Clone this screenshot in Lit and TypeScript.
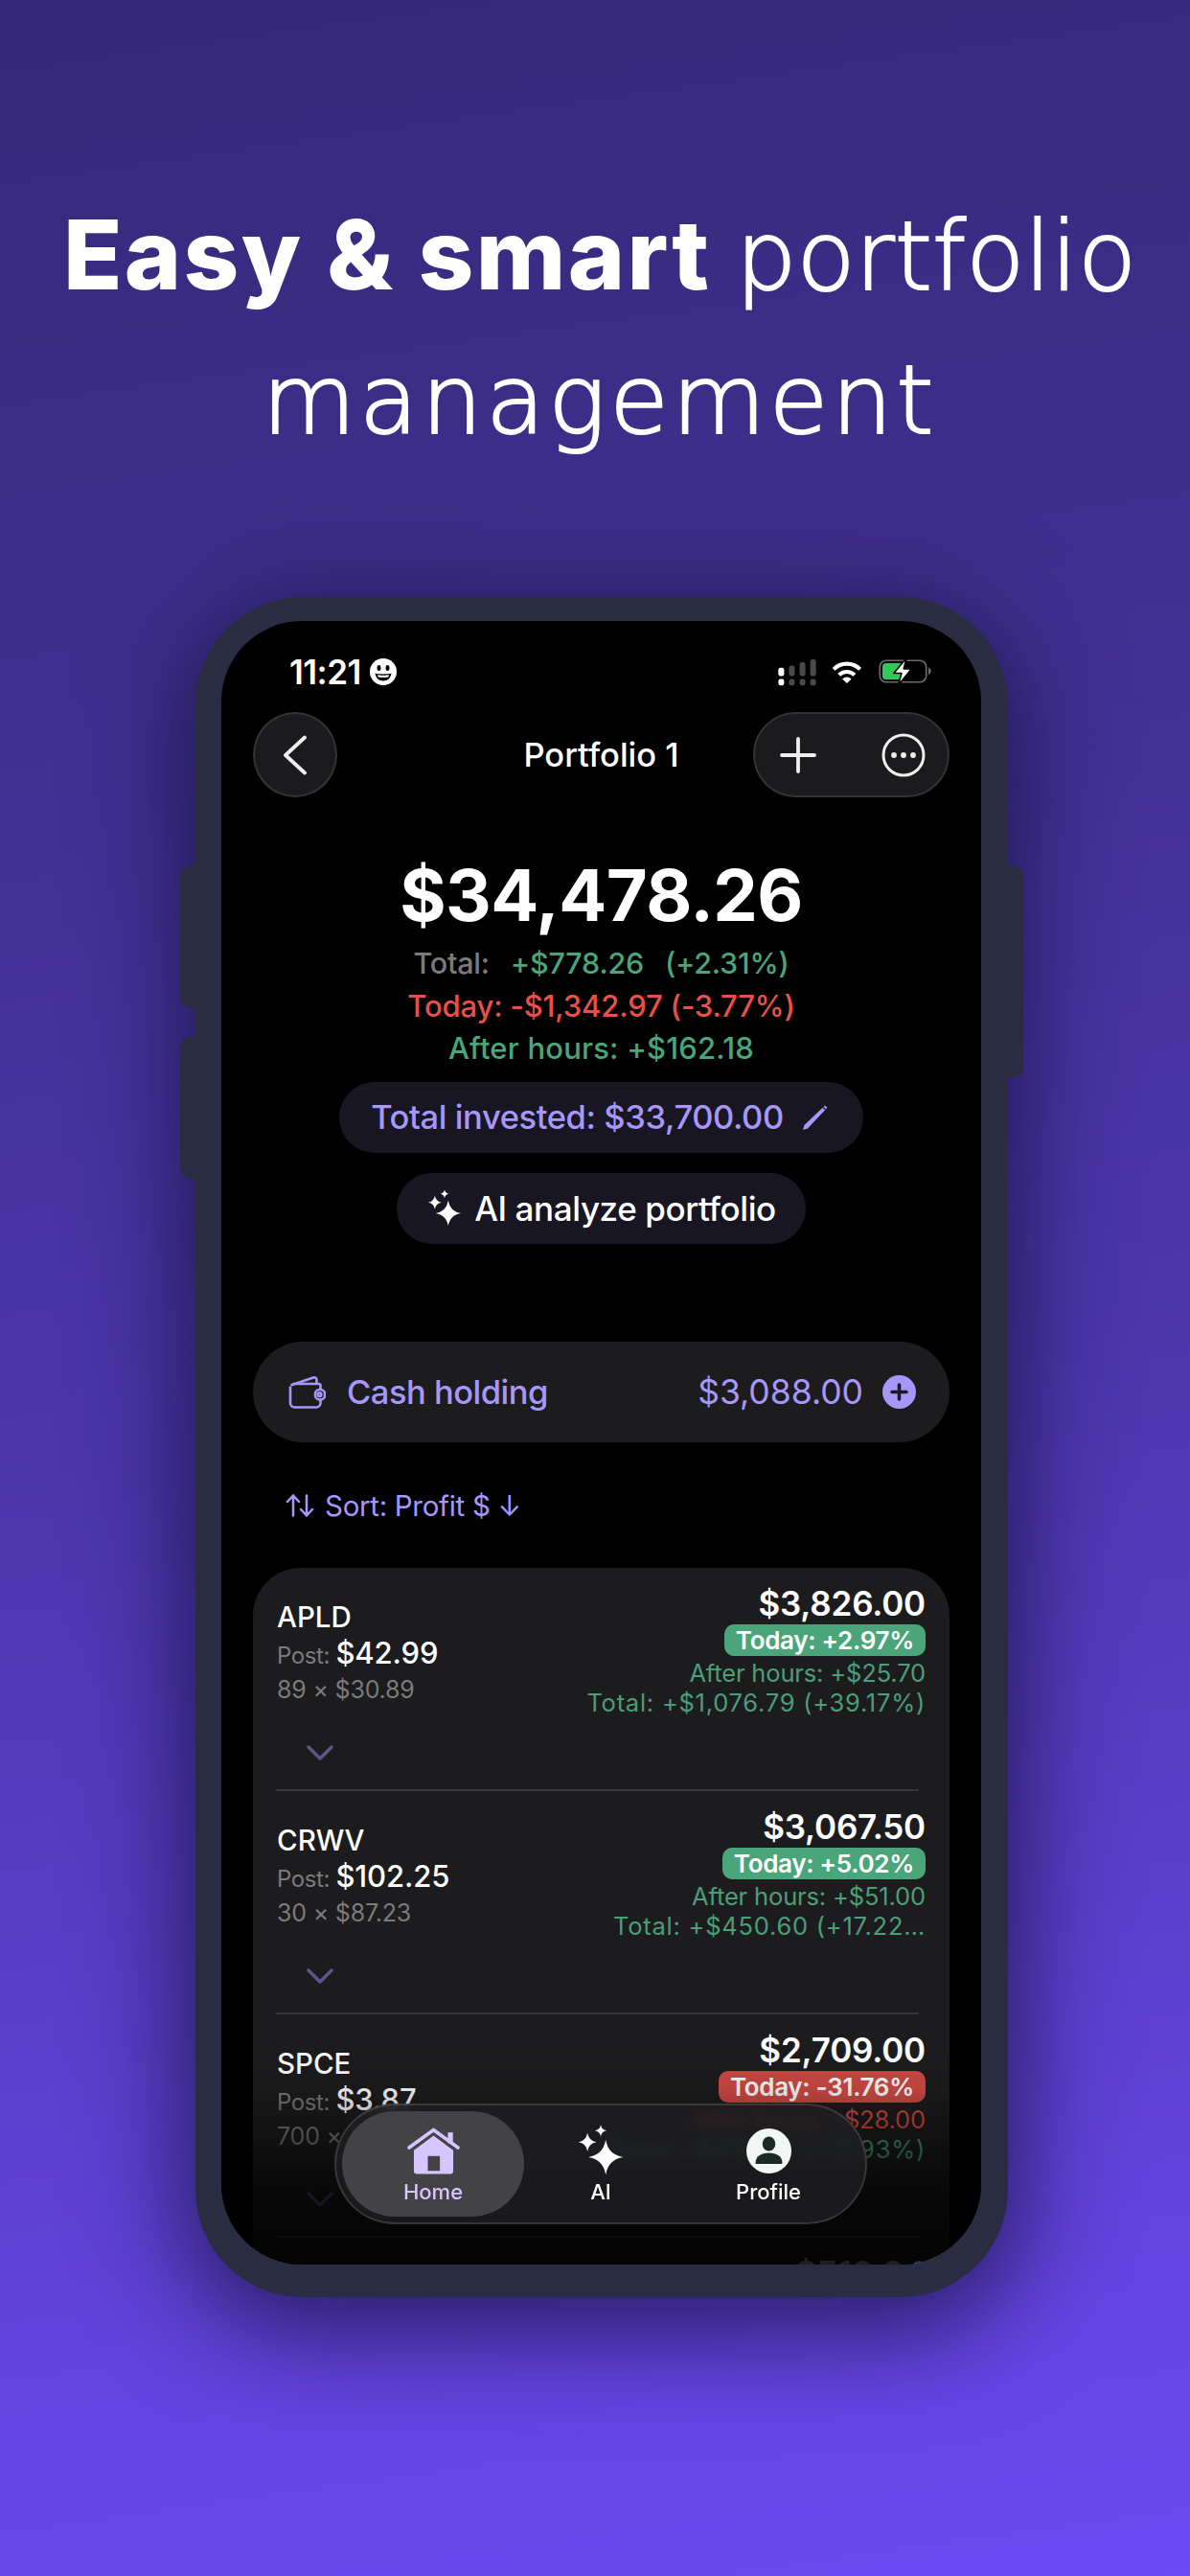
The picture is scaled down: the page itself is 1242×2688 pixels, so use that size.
import { LitElement, html, css } from "lit";
import { customElement } from "lit/decorators.js";

type Row = { sym: string; post: string; shares: string; value: string; today: string; up: boolean; after: string; total: string };

const ROWS: Row[] = [
  { sym: "APLD", post: "$42.99", shares: "89 × $30.89", value: "$3,826.00", today: "Today: +2.97%", up: true, after: "After hours: +$25.70", total: "Total: +$1,076.79 (+39.17%)" },
  { sym: "CRWV", post: "$102.25", shares: "30 × $87.23", value: "$3,067.50", today: "Today: +5.02%", up: true, after: "After hours: +$51.00", total: "Total: +$450.60 (+17.22…" },
  { sym: "SPCE", post: "$3.87", shares: "700 × $3.28", value: "$2,709.00", today: "Today: -31.76%", up: false, after: "After hours: -$28.00", total: "Total: +$412.00 (+17.93%)" },
];

const star = (cx: number, cy: number, r: number) => {
  const k = r * 0.14;
  return `M${cx} ${cy - r}Q${cx + k} ${cy - k} ${cx + r} ${cy}Q${cx + k} ${cy + k} ${cx} ${cy + r}Q${cx - k} ${cy + k} ${cx - r} ${cy}Q${cx - k} ${cy - k} ${cx} ${cy - r}Z`;
};

const sparkles = (w: number, h: number) => html`<svg width=${w} height=${h} viewBox="0 0 60 62" fill="currentColor">
  <path d=${star(36, 39, 21)} /><path d=${star(14, 21, 11)} /><path d=${star(30, 7, 7)} />
</svg>`;

@customElement("app-root")
export class AppRoot extends LitElement {
  static styles = css`
    :host { display: block; width: 1242px; height: 2688px; overflow: hidden; font-family: Inter, "Liberation Sans", sans-serif; color: #fff;
      background: linear-gradient(172deg, #352878 0%, #3f2f8e 25%, #4c37ad 55%, #6c49f2 100%); }
    .headline { margin: 0; padding: 190px 0 0 10px; height: 623px; box-sizing: border-box; text-align: center; font-family: "DejaVu Sans", Inter, sans-serif; font-size: 100px; line-height: 150px; font-weight: 200; -webkit-text-stroke: 2px #fff; }
    .headline b { font-family: Inter, sans-serif; font-weight: 800; font-size: 101px; letter-spacing: 2.300px; margin-right: -6px; -webkit-text-stroke: 0; }
    .headline .line2 { letter-spacing: 3.800px; }
    .phone { position: relative; margin-left: 204px; width: 848px; height: 1774px; box-sizing: border-box; padding: 25px 28px 34px 27px; background: #2a2d42; border-radius: 112px; box-shadow: 0 24px 110px 12px rgba(18, 14, 50, .72); }
    .btn { position: absolute; background: #2a2d42; width: 24px; }
    .l1 { left: -16px; top: 280px; height: 149px; border-radius: 12px 0 0 12px; }
    .l2 { left: -16px; top: 458px; height: 149px; border-radius: 12px 0 0 12px; }
    .r1 { right: -16px; top: 280px; height: 222px; border-radius: 0 12px 12px 0; }
    .screen { position: relative; height: 1715px; background: #000; border-radius: 84px; overflow: hidden; }
    .status { display: flex; align-items: center; justify-content: space-between; height: 40px; padding: 33px 51px 22px 71px; }
    .time { display: flex; align-items: center; gap: 9px; font-size: 35px; font-weight: 600; letter-spacing: -.5px; }
    .status-icons { display: flex; align-items: center; gap: 13px; }
    .nav { display: grid; grid-template-columns: 1fr auto 1fr; align-items: center; height: 89px; padding: 0 33px; }
    .glass { background: #1b1b1d; border: 2px solid #333335; box-sizing: border-box; height: 89px; display: flex; align-items: center; }
    .back { width: 88px; border-radius: 50%; justify-content: center; }
    .acts { justify-self: end; width: 205px; border-radius: 45px; justify-content: space-between; padding: 0 23px 0 26px; }
    .title { font-size: 34.500px; font-weight: 500; }
    .hero { display: flex; flex-direction: column; align-items: center; }
    .amount { margin-top: 62px; font-size: 74px; line-height: 80px; font-weight: 700; letter-spacing: -.6px; }
    .stat { line-height: 44.500px; font-weight: 450; font-size: 31px; }
    .stat.first { margin-top: 9px; font-size: 30.500px; letter-spacing: -.2px; word-spacing: 3px; }
    .stat.second { letter-spacing: -.15px; }
    .stat.third { letter-spacing: .2px; }
    .grey { color: #7b7b7b; }
    .green { color: #4ba57b; }
    .red { color: #e9504a; }
    .pill { display: flex; align-items: center; height: 74px; border-radius: 37px; background: #171622; font-size: 34.500px; font-weight: 500; letter-spacing: -.4px; }
    .invested { margin-top: 12px; padding: 0 34px 0 33px; gap: 17px; color: #a797fb; }
    .ai { margin-top: 21px; padding: 0 31px; gap: 12px; font-size: 35px; }
    .cash { display: flex; align-items: center; justify-content: space-between; height: 105px; margin: 102px 33px 0; border-radius: 53px; background: #1c1c1e; padding: 0 35px 0 36px; color: #a797fb; font-size: 34.500px; font-weight: 500; letter-spacing: -.5px; }
    .cash div { display: flex; align-items: center; }
    .cash .l { gap: 22px; }
    .cash .r { gap: 20px; font-size: 35.500px; font-weight: 400; letter-spacing: 0; }
    .sort { display: flex; align-items: center; gap: 11px; height: 40px; margin: 46px 0 45px 67px; color: #a797fb; font-size: 29.500px; letter-spacing: -.3px; }
    .card { margin: 0 33px; background: #1c1c1e; border-radius: 50px 50px 0 0; }
    .row { display: flex; justify-content: space-between; height: 231px; padding: 0 25px; }
    .divider { height: 2px; background: #38383a; margin: 0 32px 0 24px; }
    .left { padding-top: 33px; }
    .sym { font-size: 29.500px; line-height: 36px; font-weight: 500; }
    .post { margin-top: 2px; font-size: 24px; line-height: 36px; color: #7b7b7b; letter-spacing: -.4px; }
    .post b { color: #fff; font-size: 31px; font-weight: 500; letter-spacing: -.1px; }
    .shares { font-size: 25px; line-height: 34px; color: #7b7b7b; letter-spacing: -.2px; }
    .chev { display: block; margin: 41px 0 0 31px; }
    .right { display: flex; flex-direction: column; align-items: flex-end; padding-top: 17px; white-space: nowrap; }
    .value { font-size: 35px; line-height: 40px; font-weight: 600; letter-spacing: -.2px; }
    .badge { margin-top: 2px; height: 33px; line-height: 33px; border-radius: 10px; padding: 0 12px; font-size: 26px; font-weight: 600; letter-spacing: -.3px; }
    .badge.up { background: #4ba57b; }
    .badge.down { background: #d04a45; }
    .sub { font-size: 25.500px; line-height: 31px; letter-spacing: -.15px; }
    .after { margin-top: 2px; }
    .total { letter-spacing: .75px; }
    .sub.green { color: #4b9e77; }
    .sub.red { color: #d64a45; }
    .peek { justify-content: flex-end; }
    .fade { position: absolute; left: 0; right: 0; top: 1482px; bottom: 0; background: linear-gradient(180deg, rgba(0,0,0,0) 0%, rgba(0,0,0,.1) 21%, rgba(0,0,0,.45) 47%, rgba(0,0,0,.75) 69%, rgba(0,0,0,.88) 100%); }
    .tabs { position: absolute; left: 118px; top: 1547px; width: 556px; height: 126px; box-sizing: border-box; padding: 6px; display: grid; grid-template-columns: 190px 160px 190px; border: 2px solid rgba(255,255,255,.13); border-radius: 63px; background: rgba(30,30,32,.83); backdrop-filter: blur(4px); }
    .tab { display: flex; flex-direction: column; align-items: center; height: 110px; border-radius: 55px; box-sizing: border-box; padding-top: 12px; font-size: 22px; font-weight: 500; line-height: 28px; }
    .tab .slot { height: 58px; display: flex; align-items: center; justify-content: center; }
    .tab.on { background: #434345; color: #d6c6ff; }
  `;

  private rowTpl(r: Row, i: number) {
    return html`
      ${i > 0 ? html`<div class="divider"></div>` : ""}
      <div class="row">
        <div class="left">
          <div class="sym">${r.sym}</div>
          <div class="post">Post: <b>${r.post}</b></div>
          <div class="shares">${r.shares}</div>
          <svg class="chev" width="28" height="16" viewBox="0 0 28 16" fill="none" stroke="#5f5590" stroke-width="3.4" stroke-linecap="round" stroke-linejoin="round"><path d="M2 2l12 12L26 2" /></svg>
        </div>
        <div class="right">
          <div class="value">${r.value}</div>
          <div class="badge ${r.up ? "up" : "down"}">${r.today}</div>
          <div class="sub after ${r.up ? "green" : "red"}">${r.after}</div>
          <div class="sub total green">${r.total}</div>
        </div>
      </div>`;
  }

  render() {
    return html`
      <h1 class="headline"><b>Easy &amp; smart</b> portfolio<br /><span class="line2">management</span></h1>
      <div class="phone">
        <div class="btn l1"></div><div class="btn l2"></div><div class="btn r1"></div>
        <div class="screen">
          <div class="status">
            <div class="time">11:21
              <svg width="28" height="28" viewBox="0 0 28 28"><circle cx="14" cy="14" r="14" fill="#fff"/><ellipse cx="9.500" cy="10" rx="2" ry="3" fill="#000"/><ellipse cx="18.500" cy="10" rx="2" ry="3" fill="#000"/><path d="M5.500 15.500c3 1.200 14 1.200 17 0-.6 5-4 8-8.500 8s-7.900-3-8.500-8z" fill="#000"/><path d="M8 17.300c3 .6 9 .6 12 0l-.6 2.200c-3 .6-7.800.6-10.800 0z" fill="#fff"/></svg>
            </div>
            <div class="status-icons">
              <svg width="42" height="31" viewBox="30 30 125 92">
                <rect x="34" y="62" width="18" height="26" rx="7" fill="#fff"/><rect x="67" y="55" width="18" height="33" rx="7" fill="#4a4a4a"/><rect x="100" y="45" width="18" height="43" rx="7" fill="#4a4a4a"/><rect x="133" y="36" width="18" height="52" rx="7" fill="#4a4a4a"/>
                <rect x="34" y="97" width="18" height="20" rx="7" fill="#fff"/><rect x="67" y="97" width="18" height="20" rx="7" fill="#4a4a4a"/><rect x="100" y="97" width="18" height="20" rx="7" fill="#4a4a4a"/><rect x="133" y="97" width="18" height="20" rx="7" fill="#4a4a4a"/>
              </svg>
              <svg width="36" height="27" viewBox="190 35 115 82" fill="none" stroke="#fff" stroke-width="13"><path d="M203 66A62 62 0 0 1 291 66"/><path d="M221 85A37 37 0 0 1 273 85"/><path d="M247 113L232 98A21 21 0 0 1 262 98Z" fill="#fff" stroke="none"/></svg>
              <svg width="58" height="32" viewBox="340 30 175 95">
                <rect x="350" y="42" width="146" height="68" rx="20" fill="none" stroke="#6a6a6a" stroke-width="5"/>
                <path d="M503 63c5 2 8 7 8 12s-3 10-8 12z" fill="#6a6a6a"/>
                <rect x="358" y="50" width="66" height="52" rx="12" fill="#34c759"/>
                <path d="M434 34L394 82H418L408 120L450 68H425Z" fill="#fff" stroke="#000" stroke-width="5" stroke-linejoin="round"/>
              </svg>
            </div>
          </div>
          <div class="nav">
            <div class="glass back"><svg width="26" height="42" viewBox="0 0 26 42" fill="none" stroke="#eee" stroke-width="3.800" stroke-linecap="round" stroke-linejoin="round"><path d="M23 2.500L3 21l20 18.500"/></svg></div>
            <div class="title">Portfolio 1</div>
            <div class="glass acts">
              <svg width="38" height="38" viewBox="0 0 38 38" stroke="#eee" stroke-width="3.800" stroke-linecap="round"><path d="M19 2v34M2 19h34"/></svg>
              <svg width="46" height="46" viewBox="0 0 46 46"><circle cx="23" cy="23" r="21" fill="none" stroke="#eee" stroke-width="3"/><circle cx="13" cy="23" r="2.900" fill="#eee"/><circle cx="23" cy="23" r="2.900" fill="#eee"/><circle cx="33" cy="23" r="2.900" fill="#eee"/></svg>
            </div>
          </div>
          <div class="hero">
            <div class="amount">$34,478.26</div>
            <div class="stat first"><span class="grey">Total:</span>&nbsp; <span class="green">+$778.26</span>&nbsp; <span class="green">(+2.31%)</span></div>
            <div class="stat second red">Today: -$1,342.97 (-3.77%)</div>
            <div class="stat third green">After hours: +$162.18</div>
            <div class="pill invested">Total invested: $33,700.00
              <svg width="32" height="30" viewBox="0 0 32 30"><path d="M26 2.500l2.500 2.300L8 26.500 3 28l1.500-5z" fill="#a797fb"/><path d="M24 4.500l2.500 2.300" stroke="#171622" stroke-width="1.200"/></svg>
            </div>
            <div class="pill ai">${sparkles(38, 40)}AI analyze portfolio</div>
          </div>
          <div class="cash">
            <div class="l">
              <svg width="40" height="35" viewBox="0 0 40 35" fill="none" stroke="#a797fb" stroke-width="2.600" stroke-linejoin="round"><path d="M3 11.500V29a4.500 4.500 0 0 0 4.500 4.500H30a4.500 4.500 0 0 0 4.500-4.500v-3.500M34.500 15V11a2 2 0 0 0-2-2H5.500"/><path d="M3.500 10.500L27 2.500c2-.6 3.500.6 3.500 2.500V9"/><rect x="29" y="15" width="10" height="10.500" rx="4.500"/><circle cx="33.500" cy="20.200" r="1.800"/></svg>
              <span>Cash holding</span>
            </div>
            <div class="r">
              <span>$3,088.00</span>
              <svg width="35" height="35" viewBox="0 0 35 35"><circle cx="17.500" cy="17.500" r="17.500" fill="#a797fb"/><path d="M17.500 10v15M10 17.500h15" stroke="#1c1c1e" stroke-width="3.600" stroke-linecap="round"/></svg>
            </div>
          </div>
          <div class="sort">
            <svg width="30" height="24" viewBox="0 0 30 24" fill="none" stroke="#a797fb" stroke-width="2.500" stroke-linecap="round" stroke-linejoin="round"><path d="M8 22.500V1.500M2 8l6-6.500L14 8M22 1.500v21M16 16l6 6.500L28 16"/></svg>
            <span>Sort: Profit $ ↓</span>
          </div>
          <div class="card">
            ${ROWS.map((r, i) => this.rowTpl(r, i))}
            <div class="divider"></div>
            <div class="row peek"><div class="right"><div class="value">$510.84</div></div></div>
          </div>
          <div class="fade"></div>
          <div class="tabs">
            <div class="tab on">
              <div class="slot"><svg width="63" height="55" viewBox="60 50 190 165">
                <rect x="200" y="74" width="16" height="34" fill="#d6c6ff"/>
                <path d="M78 122L155 66L232 122" fill="none" stroke="#d6c6ff" stroke-width="11" stroke-linecap="round" stroke-linejoin="round"/>
                <path fill-rule="evenodd" d="M155 84L217 130V195a10 10 0 0 1-10 10H103a10 10 0 0 1-10-10V130ZM137 148V195H175V148Z" fill="#d6c6ff"/>
              </svg></div>
              <span>Home</span>
            </div>
            <div class="tab">
              <div class="slot">${sparkles(52, 54)}</div>
              <span>AI</span>
            </div>
            <div class="tab">
              <div class="slot"><svg width="47" height="47" viewBox="0 0 47 47"><circle cx="23.500" cy="23.500" r="23.500" fill="#f2f7f4"/><ellipse cx="23.500" cy="16" rx="6.800" ry="7.500" fill="#1b2a26"/><path d="M9.500 36c0-7 6-10.500 14-10.500s14 3.500 14 10.500c0 .8-.6 1-1.200 1H10.700c-.6 0-1.200-.2-1.200-1z" fill="#1b2a26"/></svg></div>
              <span>Profile</span>
            </div>
          </div>
        </div>
      </div>
    `;
  }
}
